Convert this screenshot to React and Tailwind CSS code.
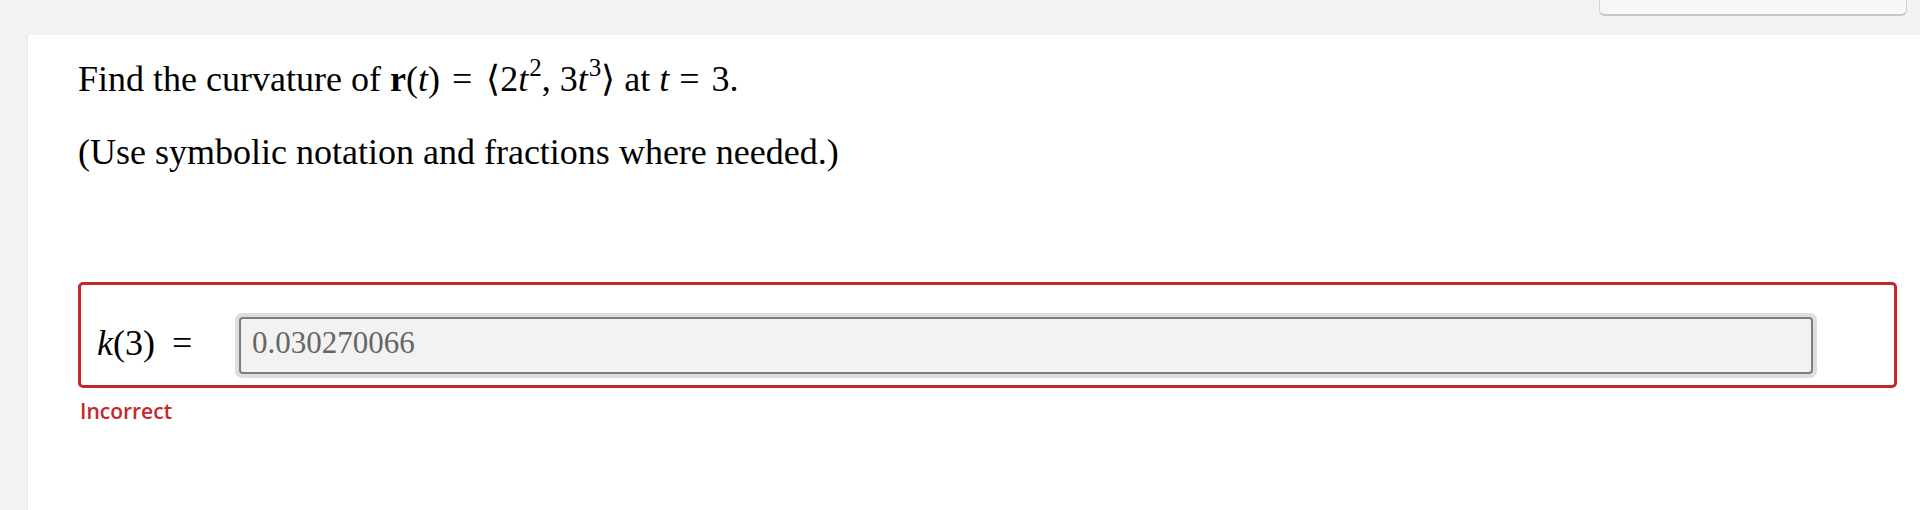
import React from "react";

const serif = { fontFamily: '"Liberation Serif", "Times New Roman", serif' };

function Sup({ children }) {
  return (
    <span className="relative -top-[15px] text-[25px] ml-[1px] leading-[0px]">{children}</span>
  );
}

export default function App() {
  return (
    <div className="w-[1920px] h-[510px] overflow-hidden bg-[#f2f2f2]">
      <div className="h-[35px] flex justify-end pr-[13px]">
        <div className="w-[308px] h-[16px] bg-[#f7f7f7] border border-t-0 border-[#d4d4d4] border-b-2 border-b-[#c6c6c6] rounded-b-[6px]" />
      </div>
      <div
        className="ml-[27px] h-[475px] bg-white border-l border-[#e6e6e6] pl-[50px] pr-[23px] pt-[23px] text-black"
        style={serif}
      >
        <p className="text-[36px] leading-[43px] h-[43px] whitespace-nowrap">
          Find the curvature of <b>r</b>(<i>t</i>)
          <span className="ml-[12px] mr-[14px]">=</span>
          <span className="leading-[0px]">⟨</span>2<i>t</i>
          <Sup>2</Sup>, 3<i>t</i>
          <Sup>3</Sup>
          <span className="leading-[0px]">⟩</span> at <i>t</i>
          <span className="ml-[10px] mr-[12px]">=</span>3.
        </p>
        <p className="mt-[30px] text-[36px] leading-[43px] h-[43px] whitespace-nowrap">
          (Use symbolic notation and fractions where needed.)
        </p>

        <div className="mt-[108px] w-[1819px] h-[106px] border-[3px] border-[#c1272d] rounded-[5px] pl-[16px] pt-[28px] flex items-start">
          <div className="w-[138px] h-[65px] flex items-center pb-[5px] text-[36px] leading-[43px] whitespace-nowrap">
            <span>
              <i>k</i>(3)<span className="ml-[17px]">=</span>
            </span>
          </div>
          <div className="w-[1582px] h-[65px] p-[4px] bg-[#dedede] rounded-[7px]">
            <div className="h-full border-2 border-[#7d7d7d] rounded-[4px] bg-[#f2f2f2] pl-[11px] pb-[7px] flex items-center">
              <span className="text-[31px] leading-[31px] text-[#666666]">0.030270066</span>
            </div>
          </div>
        </div>

        <div
          className="mt-[11px] ml-[2px] text-[21px] leading-[24px] font-semibold text-[#c8262c]"
          style={{ fontFamily: '"Open Sans", "Noto Sans", sans-serif' }}
        >
          Incorrect
        </div>
      </div>
    </div>
  );
}
